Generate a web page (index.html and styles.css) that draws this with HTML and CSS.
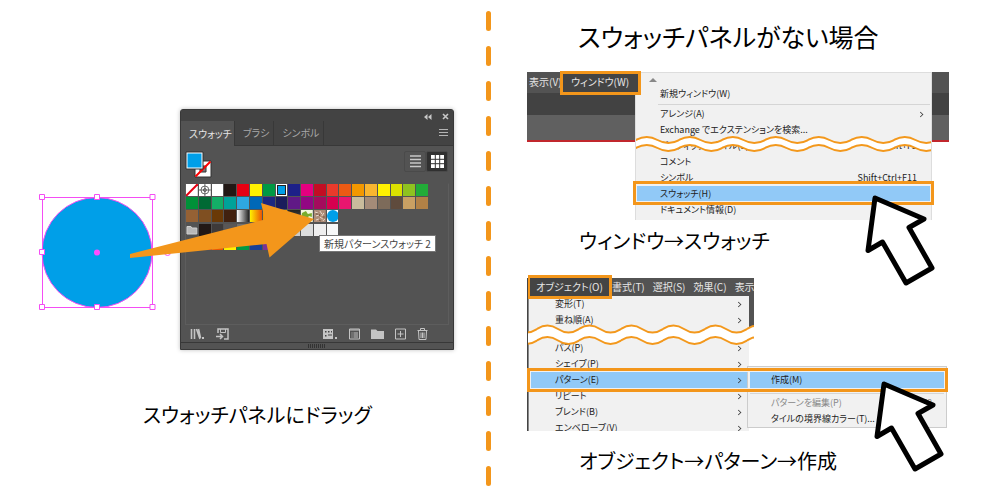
FILE: index.html
```html
<!DOCTYPE html>
<html lang="ja">
<head>
<meta charset="utf-8">
<meta name="viewport" content="width=device-width, initial-scale=1">
<title>スウォッチパネルにドラッグ</title>
<link rel="stylesheet" href="styles.css">
</head>
<body>
<svg width="0" height="0" class="defs" aria-hidden="true">
  <defs>
    <symbol id="pointer" viewBox="0 0 74 94"><path d="M12 6 61 27 46 35.500 69 76 43 91 19.500 50 5 58.500Z" fill="#fff" stroke="#000" stroke-width="5" stroke-linejoin="round"/></symbol>
    <pattern id="tear-a" width="43" height="20" patternUnits="userSpaceOnUse">
      <path d="M0 6q10.750-6 21.500 0t21.500 0V14q-10.750 6-21.500 0t-21.500 0Z" fill="#fff"/>
      <path d="M-1 6.500 0 6q10.750-6 21.500 0t21.500 0l1-.5M-1 14.500 0 14q10.750-6 21.500 0t21.500 0l1-.5" fill="none" stroke="#f3981c" stroke-width="2"/>
    </pattern>
    <pattern id="tear-b" x="9" width="42" height="24" patternUnits="userSpaceOnUse">
      <path d="M0 6q10.500-7 21 0t21 0V17.500q-10.500 7-21 0t-21 0Z" fill="#fff"/>
      <path d="M-1 6.500 0 6q10.500-7 21 0t21 0l1-.5M-1 18 0 17.500q10.500-7 21 0t21 0l1-.5" fill="none" stroke="#f3981c" stroke-width="2"/>
    </pattern>
  </defs>
</svg>

<main class="guide">
  <section class="drag">
    <div class="stage">
      <svg class="artwork" width="144" height="120" viewBox="36 192 144 120" aria-hidden="true">
        <circle cx="97" cy="252.500" r="55" fill="#009fe8" stroke="#f44df4"/>
        <g fill="none" stroke="#f44df4">
          <path d="M42.500 197.500H152.500V307.500H42.500Z"/>
          <circle cx="167.500" cy="252.500" r="3"/>
        </g>
        <circle cx="97" cy="252.500" r="3" fill="#ff4dff"/>
        <path d="M39.500 194.500h5v5h-5zM94.500 194.500h5v5h-5zM150 194.500h5v5h-5zM39.500 249.500h5v5h-5zM39.500 304.500h5v5h-5zM94.500 304.500h5v5h-5zM150 304.500h5v5h-5z" fill="#fff" stroke="#f44df4"/>
      </svg>

      <div class="panel">
        <div class="panel-title">
          <button aria-label="折りたたむ"><svg width="8" height="6" viewBox="0 0 8 6"><path d="M3.500 0v6L0 3zM7.500 0v6L4 3z" fill="#c8c8c8"/></svg></button>
          <button aria-label="閉じる"><svg width="7" height="7" viewBox="0 0 7 7"><path d="M1 1 6 6M6 1 1 6" stroke="#c8c8c8" stroke-width="1.600"/></svg></button>
        </div>
        <div class="tabs">
          <button class="tab active">スウォッチ</button>
          <button class="tab">ブラシ</button>
          <button class="tab">シンボル</button>
          <button class="flyout" aria-label="パネルメニュー"><svg width="9" height="8" viewBox="0 0 9 8"><path d="M0 .5h9M0 3.500h9M0 6.500h9" stroke="#b4b4b4"/></svg></button>
        </div>
        <div class="panel-body">
          <div class="tools">
            <svg width="28" height="28" viewBox="0 0 28 28" aria-hidden="true">
              <path d="M10 10h16v16H10z" fill="#fff" stroke="#333"/>
              <path d="M15 15h6v6h-6z" fill="#777" stroke="#333"/>
              <path d="M10.500 25.500 25.500 10.500" stroke="#f00" stroke-width="2"/>
              <path d="M1 1h17v17H1z" fill="#fff" stroke="#333"/>
              <path d="M2.500 2.500h14v14h-14z" fill="#009fe8"/>
            </svg>
            <div class="views">
              <button aria-label="リスト表示"><svg width="11" height="13" viewBox="0 0 11 13"><path d="M0 1h11M0 4.500h11M0 8h11M0 11.500h11" stroke="#c8c8c8" stroke-width="1.500"/></svg></button>
              <button class="on" aria-label="サムネール表示"><svg width="13" height="13" viewBox="0 0 13 13"><path d="M0 0h13v13H0z" fill="#fff"/><path d="M4.300 0v13M8.700 0v13M0 4.300h13M0 8.700h13" stroke="#333"/></svg></button>
            </div>
          </div>
          <div class="swatches" id="swatches"></div>
          <div class="panel-foot">
            <button aria-label="ライブラリ"><svg width="15" height="12" viewBox="0 0 15 12"><path d="M1.500 1v10M4.500 1v10M6.500 1 10 11M8.500 1l2 9" stroke="#c4c4c4" stroke-width="1.600"/><path d="M12 9h2v2h-2z" fill="#c4c4c4"/></svg></button>
            <button aria-label="読み込み"><svg width="13" height="12" viewBox="0 0 13 12"><path d="M2 5V1h10v10H8" fill="none" stroke="#c4c4c4" stroke-width="1.500"/><path d="M4.500 1v3.500h5V1" fill="none" stroke="#c4c4c4"/><path d="M0 8.500h6M4 6 6.500 8.500 4 11" fill="none" stroke="#c4c4c4" stroke-width="1.500"/></svg></button>
            <span class="space"></span>
            <button aria-label="種類"><svg width="15" height="12" viewBox="0 0 15 12"><path d="M0 1h10v10H0z" fill="#c4c4c4"/><path d="M2 3h1.500v1.500H2zM5 3h1.500v1.500H5zM8 3h1v1.500H8zM2 7h1.500v1.500H2zM5 6.500h4v1H5z" fill="#444"/><path d="M12 9h2v2h-2z" fill="#c4c4c4"/></svg></button>
            <button aria-label="オプション"><svg width="11" height="12" viewBox="0 0 11 12"><path d="M.5 1h10v10H.5z" fill="none" stroke="#c4c4c4"/><path d="M0 2h11M2.500 5h1M4.500 5H9M2.500 7h1M4.500 7H9M2.500 9h1M4.500 9H9" stroke="#c4c4c4"/></svg></button>
            <button aria-label="グループ"><svg width="13" height="12" viewBox="0 0 13 12"><path d="M0 1.500h5L6.500 3H13v8H0z" fill="#c4c4c4"/></svg></button>
            <button aria-label="新規"><svg width="11" height="12" viewBox="0 0 11 12"><path d="M.5 1h10v10H.5zM5.500 3v6M2.500 6h6" fill="none" stroke="#c4c4c4"/></svg></button>
            <button aria-label="削除"><svg width="11" height="12" viewBox="0 0 11 12"><path d="M.5 2.500h10M3.500 2V.5h4V2M1.500 3l.5 8.500h7l.5-8.500M4 4.500v5.500M5.500 4.500v5.500M7 4.500v5.500" fill="none" stroke="#c4c4c4"/></svg></button>
          </div>
        </div>
        <div class="grip"><span></span></div>
      </div>

      <div class="tooltip">新規パターンスウォッチ 2</div>
      <svg class="drag-arrow" width="185" height="56" viewBox="130 202 185 56" aria-hidden="true"><path d="M130 254 265 219.500 261 203 314 219 269.500 257.500 266.500 244 130 258Z" fill="#f3961b"/></svg>
    </div>
    <p class="caption">スウォッチパネルにドラッグ</p>
  </section>

  <svg class="divider" aria-hidden="true"><line x1="2.500" x2="2.500" y1="13.500" y2="485" stroke="#f3961b" stroke-width="5" stroke-linecap="round" stroke-dasharray="15 20"/></svg>

  <section class="missing">
    <h1>スウォッチパネルがない場合</h1>

    <div class="shot window-shot">
      <div class="app">
        <div class="menubar"><button>表示(V)</button><button class="open framed">ウィンドウ(W)</button></div>
        <div class="options"></div>
        <div class="canvas"></div>
      </div>
      <div class="menu">
        <div class="scroll-up"></div>
        <button class="item">新規ウィンドウ(W)</button>
        <hr>
        <button class="item">アレンジ(A)<i class="more"></i></button>
        <button class="item">Exchange でエクステンションを検索...</button>
        <button class="item">グラフィックスタイル(S)<kbd>Shift+F5</kbd></button>
        <button class="item">コメント</button>
        <button class="item">シンボル<kbd>Shift+Ctrl+F11</kbd></button>
        <button class="item current">スウォッチ(H)</button>
        <button class="item">ドキュメント情報(D)</button>
        <svg class="tear" height="20" aria-hidden="true"><rect width="100%" height="20" fill="url(#tear-a)"/></svg>
        <span class="frame"></span>
      </div>
      <svg class="pointer" aria-hidden="true"><use href="#pointer"/></svg>
    </div>
    <p class="caption">ウィンドウ→スウォッチ</p>

    <div class="shot object-shot">
      <div class="host">
        <div class="menubar"><button class="open framed">オブジェクト(O)</button><button>書式(T)</button><button>選択(S)</button><button>効果(C)</button><button>表示(</button></div>
        <div class="menu">
          <button class="item">変形(T)<i class="more"></i></button>
          <button class="item">重ね順(A)<i class="more"></i></button>
          <div class="gap"></div>
          <button class="item">パス(P)<i class="more"></i></button>
          <button class="item">シェイプ(P)<i class="more"></i></button>
          <button class="item current">パターン(E)<i class="more"></i></button>
          <button class="item">リピート<i class="more"></i></button>
          <button class="item">ブレンド(B)<i class="more"></i></button>
          <button class="item">エンベロープ(V)<i class="more"></i></button>
        </div>
        <svg class="tear" height="24" aria-hidden="true"><rect width="100%" height="24" fill="url(#tear-b)"/></svg>
      </div>
      <div class="menu submenu">
        <button class="item current">作成(M)</button>
        <hr>
        <button class="item" disabled>パターンを編集(P)<kbd>F8</kbd></button>
        <button class="item">タイルの境界線カラー(T)...</button>
      </div>
      <span class="frame"></span>
      <svg class="pointer" aria-hidden="true"><use href="#pointer"/></svg>
    </div>
    <p class="caption">オブジェクト→パターン→作成</p>
  </section>
</main>
<script src="script.js"></script>
</body>
</html>
```
FILE: styles.css
```css
* { box-sizing: border-box; }
body {
  margin: 0;
  background: #fff;
  color: #000;
  font-family: "Noto Sans CJK JP", sans-serif;
  font-feature-settings: "palt";
}
button {
  margin: 0;
  padding: 0;
  border: 0;
  background: none;
  color: inherit;
  font: inherit;
  font-feature-settings: inherit;
  white-space: nowrap;
}
svg { display: block; }
.defs { position: absolute; }

.guide {
  display: grid;
  grid-template-columns: minmax(0, 486fr) 5px minmax(0, 491fr);
  min-height: 100vh;
}
.divider { width: 5px; height: 100%; }
h1 { margin: 0; padding: 16px 0 0 87px; font-size: 25px; line-height: 40px; font-weight: 400; height: 72px; }
.caption { margin: 0; font-size: 20px; line-height: 28px; }

/* drag step */
.stage {
  position: relative;
  display: flex;
  align-items: flex-start;
  padding: 109px 0 0 36px;
}
.artwork { margin-top: 83px; flex: none; }
.drag .caption { margin-top: 51px; padding-left: 143px; }
.drag-arrow { position: absolute; left: 130px; top: 202px; }
.tooltip {
  position: absolute;
  left: 319px;
  top: 235px;
  padding: 0 4px;
  border: 1px solid #777;
  background: #fff;
  color: #444;
  font-size: 10px;
  line-height: 15px;
  white-space: nowrap;
}

.panel {
  width: 274px;
  border: 1px solid #383838;
  border-radius: 3px 3px 0 0;
  background: #535353;
  color: #a8a8a8;
  font-size: 10px;
  box-shadow: 0 0 4px rgba(0, 0, 0, .25);
}
.panel-title {
  display: flex;
  justify-content: flex-end;
  align-items: center;
  gap: 10px;
  height: 11px;
  padding: 2px 4px 0 0;
  background: #434343;
}
.tabs { display: flex; height: 25px; background: #434343; border-bottom: 1px solid #383838; }
.tab { padding: 0 4px 0 8px; border-right: 1px solid #383838; line-height: 20px; }
.tab.active { height: 25px; padding-right: 2px; background: #535353; color: #e4e4e4; }
.flyout { margin: 0 5px 0 auto; }
.panel-body { padding: 5px 4px 0; }
.tools { display: flex; justify-content: space-between; align-items: flex-start; }
.views { display: flex; padding: 0 1px; }
.views button {
  display: grid;
  place-items: center;
  width: 22px;
  height: 21px;
  border: 1px solid #4a4a4a;
  border-radius: 2px;
}
.views .on { background: #303030; }
.swatches {
  height: 142px;
  margin-top: 4px;
  padding-right: 20px;
  border: 1px solid #5d5d5d;
  border-top-color: #535353;
}
.row { display: grid; grid-template-columns: repeat(19, 1fr); gap: 1px; margin-bottom: 1px; }
.row.group { margin-top: 2px; margin-bottom: 2px; }
.swatch { height: 12px; }
.swatch svg { width: 100%; height: 12px; }
.swatch.selected { border: 1px solid #fff; outline: 1px solid #222; outline-offset: -2px; }
.panel-foot {
  display: flex;
  align-items: center;
  gap: 11px;
  height: 17px;
  padding: 0 21px 0 5px;
}
.space { flex: 1; }
.grip { height: 7px; display: grid; place-items: center; border-top: 1px solid #383838; }
.grip span { width: 18px; height: 4px; background: repeating-linear-gradient(90deg, #333 0 1px, #535353 1px 2px); }

/* menu pictures */
.missing .caption { padding-left: 88px; }
.shot { position: relative; margin-left: 36px; display: grid; font-size: 9px; }
.menubar { display: flex; background: #535353; color: #e6e6e6; font-size: 10px; }
.menubar button { flex: none; }
.menu { background: #f1f1f1; color: #222; }
.item {
  display: flex;
  align-items: center;
  width: 100%;
  height: 16px;
  line-height: 16px;
}
.item:disabled { color: #888; }
.current { background: #91c9f7; }
.item kbd { margin-left: auto; font: inherit; }
.more {
  width: 5px;
  height: 5px;
  margin-left: auto;
  border: solid #333;
  border-width: 1px 1px 0 0;
  transform: rotate(45deg) scale(.8);
}
hr { margin: 0; border: 0; border-top: 1px solid #d5d5d5; }
.frame { position: absolute; border: 3px solid #f3961b; box-shadow: inset 0 0 0 1px #f1f1f1; z-index: 2; }
.framed { outline: 3px solid #f3961b; }
.tear { position: absolute; width: 100%; left: 0; }
.pointer { position: absolute; width: 74px; height: 94px; z-index: 3; }

.window-shot { width: 422px; grid-template-columns: 108px 297px 17px; }
.app { grid-area: 1 / 1 / 2 / 4; }
.app .menubar { height: 21px; padding: 2px 0 1px 2px; }
.app .open { position: relative; z-index: 1; width: 75px; margin-left: 1px; background: #444; }
.app .menubar button { padding-bottom: 3px; line-height: 15px; }
.options { height: 22px; background: #424242; }
.canvas { height: 27px; background: #606060; border-bottom: 2px solid #c1272d; }
.window-shot .menu { position: relative; grid-area: 1 / 2 / 2 / 3; height: 148px; border: solid #ddd; border-width: 1px 1px 0; }
.window-shot .item { padding: 0 14px 0 24px; }
.window-shot .item .more { margin-right: -6px; }
.scroll-up { height: 13px; }
.scroll-up::before { content: ""; display: block; width: 0; margin-left: 13px; border: solid transparent; border-width: 5px 4px 4px; border-bottom-color: #888; }
.window-shot hr { margin: 2px 1px 1px 22px; }
.window-shot .tear { top: 61px; }
.window-shot .frame { left: -3px; right: -3px; top: 108px; height: 24px; }
.window-shot .pointer { left: 336px; top: 120px; }
.window-shot + .caption { margin-top: 7px; }

.object-shot { width: 421px; margin-top: 23px; grid-template-columns: 227px 1fr; }
.host { position: relative; grid-area: 1 / 1; background: linear-gradient(#535353 56px, #fff 56px); border-left: 1px solid #444; }
.host .menubar { height: 18px; gap: 8px; padding-left: 2px; overflow-x: clip; overflow-y: visible; overflow-clip-margin: 3px; }
.host .menubar button { line-height: 18px; }
.host .open { width: 79px; height: 18px; margin-right: -5px; background: #444; }
.host .menu { width: 221px; height: 135px; overflow: hidden; border-left: 1px solid #888; }
.host .item { padding: 0 8px 0 26px; }
.gap { height: 12px; }
.host .tear { top: 45px; }
.submenu { position: relative; z-index: 1; grid-area: 1 / 1 / 2 / 3; align-self: start; margin: 88px 1px 0 220px; padding: 5px 2px 1px; border: 1px solid #ccc; height: 62px; }
.submenu .item { padding: 0 12px 0 21px; }
.submenu hr { margin: 5px 0 1px; }
.object-shot .frame { left: 0; right: 0; top: 90px; height: 24px; }
.object-shot .pointer { left: 345px; top: 100px; }
.object-shot + .caption { margin-top: 16px; }
```
FILE: script.js
```js
const rows = [
  ["none", "registration", "#fff", "#221815", "#e60012", "#fff100", "#009944", "current", "#1d2088", "#e4007f", "#c30d23", "#ea3a2b", "#eb5a14", "#f39800", "#f8b530", "#fff100", "#dbe000", "#8fc31f", "#22ac38"],
  ["#009138", "#006934", "#13ae67", "#00a29a", "#2ea7e0", "#0068b7", "#1d2880", "#1b1c5c", "#601986", "#920783", "#a40b5d", "#d7004f", "#e9166f", "#c9bc9c", "#a48b78", "#7d6b5a", "#5f4b3d", "#caa063", "#b28146"],
  ["#956134", "#7f4f21", "#6a3906", "#41210f", "linear-gradient(90deg,#fff,#222)", "linear-gradient(90deg,#fff100,#ea5504)", "#f39800", "#f39800", "linear-gradient(#222,#555)", "leaves", "fur", "dot"],
  ["folder", "#221815", "#3e3a39", "#595757", "#727171", "#898989", "#9fa0a0", "#b5b5b6", "#c9caca", "#dcdddd", "#efefef", "#f7f8f8"],
  ["folder", "#e60012", "#ea5504", "#fff100", "#009944", "#183f96", "#7b3294"]
];

const art = {
  none: '<path d="M0 0h12v12H0z" fill="#fff"/><path d="M0 12 12 0" stroke="#e60012" stroke-width="2"/>',
  registration: '<path d="M0 0h12v12H0z" fill="#fff"/><g fill="none" stroke="#444" stroke-width=".8"><circle cx="6" cy="6" r="4"/><circle cx="6" cy="6" r="1.5"/><path d="M6 0v12M0 6h12"/></g>',
  leaves: '<path d="M0 0h12v12H0z" fill="#f4f8dd"/><path d="M1 3l4-2 2 3 4-1v4L8 6 6 10 3 7 0 9z" fill="#79ad2c"/>',
  fur: '<path d="M0 0h12v12H0z" fill="#ae8d78"/><path d="M1 2l3 1M6 1l2 3M10 3l-2 3M2 6l3-1M6 7l3 2M2 10l3-1M9 11l2-2" stroke="#eadbcd"/><path d="M2 4l2 0M5 4l1 2M9 7l2 0M5 10l2 1" stroke="#70503b"/>',
  dot: '<path d="M0 0h12v12H0z" fill="#fff"/><circle cx="6" cy="6" r="6" fill="#009fe8"/>',
  folder: '<path d="M1 2.500h4L6 4h5v6H1z" fill="#b8b8b8" stroke="#d0d0d0"/>'
};

const panel = document.getElementById("swatches");
rows.forEach((colors, index) => {
  const row = document.createElement("div");
  row.className = index > 2 ? "row group" : "row";
  colors.forEach((color) => {
    const swatch = document.createElement("button");
    swatch.className = "swatch";
    swatch.setAttribute("aria-label", color);
    if (art[color]) {
      swatch.innerHTML = `<svg viewBox="0 0 12 12" preserveAspectRatio="none">${art[color]}</svg>`;
    } else if (color === "current") {
      swatch.classList.add("selected");
      swatch.style.background = "#009fe8";
    } else {
      swatch.style.background = color;
    }
    row.append(swatch);
  });
  panel.append(row);
});
```
